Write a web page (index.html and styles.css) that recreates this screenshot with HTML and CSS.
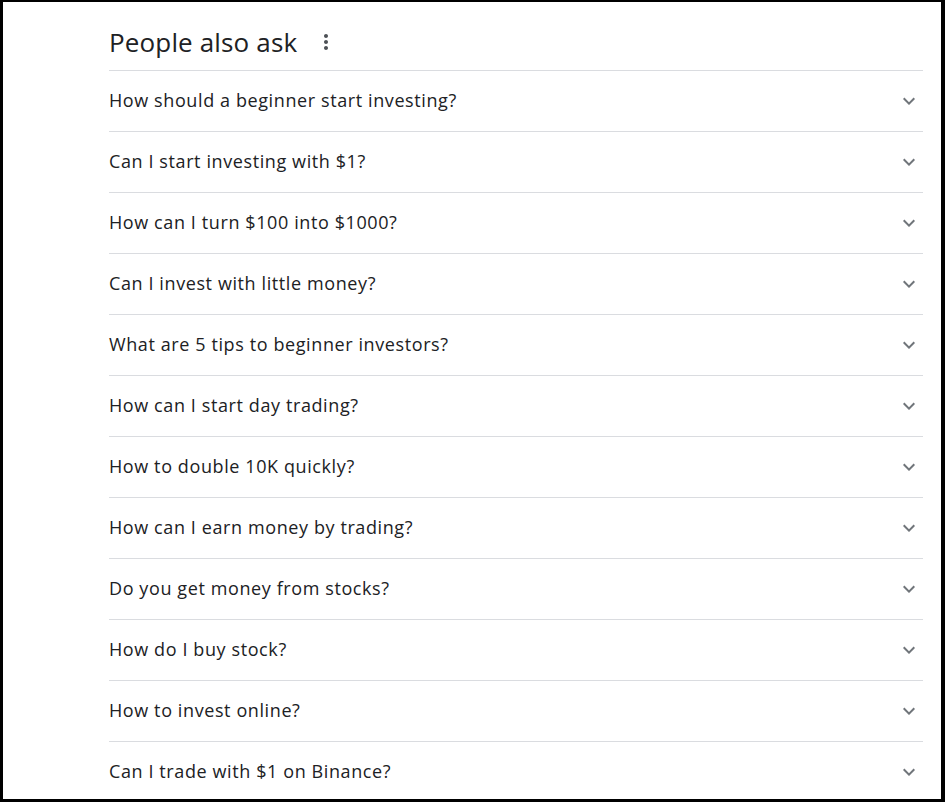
FILE: index.html
```html
<!DOCTYPE html>
<html>
<head>
<meta charset="utf-8">
<link rel="stylesheet" href="styles.css">
</head>
<body>
<div class="frame">
  <div class="paa">
    <div class="head">
      <h2 class="title">People also ask</h2>
      <svg class="more" width="24" height="24" viewBox="0 0 24 24"><path fill="#4d5156" d="M12 8c1.1 0 2-.9 2-2s-.9-2-2-2-2 .9-2 2 .9 2 2 2zm0 2c-1.1 0-2 .9-2 2s.9 2 2 2 2-.9 2-2-.9-2-2-2zm0 6c-1.1 0-2 .9-2 2s.9 2 2 2 2-.9 2-2-.9-2-2-2z"/></svg>
    </div>
    <ul class="list">
      <li class="row"><span class="q">How should a beginner start investing?</span><svg class="chev" width="24" height="24" viewBox="0 0 24 24"><path d="M16.59 8.59L12 13.17 7.41 8.59 6 10l6 6 6-6z"/></svg></li>
      <li class="row"><span class="q">Can I start investing with $1?</span><svg class="chev" width="24" height="24" viewBox="0 0 24 24"><path d="M16.59 8.59L12 13.17 7.41 8.59 6 10l6 6 6-6z"/></svg></li>
      <li class="row"><span class="q">How can I turn $100 into $1000?</span><svg class="chev" width="24" height="24" viewBox="0 0 24 24"><path d="M16.59 8.59L12 13.17 7.41 8.59 6 10l6 6 6-6z"/></svg></li>
      <li class="row"><span class="q">Can I invest with little money?</span><svg class="chev" width="24" height="24" viewBox="0 0 24 24"><path d="M16.59 8.59L12 13.17 7.41 8.59 6 10l6 6 6-6z"/></svg></li>
      <li class="row"><span class="q">What are 5 tips to beginner investors?</span><svg class="chev" width="24" height="24" viewBox="0 0 24 24"><path d="M16.59 8.59L12 13.17 7.41 8.59 6 10l6 6 6-6z"/></svg></li>
      <li class="row"><span class="q">How can I start day trading?</span><svg class="chev" width="24" height="24" viewBox="0 0 24 24"><path d="M16.59 8.59L12 13.17 7.41 8.59 6 10l6 6 6-6z"/></svg></li>
      <li class="row"><span class="q">How to double 10K quickly?</span><svg class="chev" width="24" height="24" viewBox="0 0 24 24"><path d="M16.59 8.59L12 13.17 7.41 8.59 6 10l6 6 6-6z"/></svg></li>
      <li class="row"><span class="q">How can I earn money by trading?</span><svg class="chev" width="24" height="24" viewBox="0 0 24 24"><path d="M16.59 8.59L12 13.17 7.41 8.59 6 10l6 6 6-6z"/></svg></li>
      <li class="row"><span class="q">Do you get money from stocks?</span><svg class="chev" width="24" height="24" viewBox="0 0 24 24"><path d="M16.59 8.59L12 13.17 7.41 8.59 6 10l6 6 6-6z"/></svg></li>
      <li class="row"><span class="q">How do I buy stock?</span><svg class="chev" width="24" height="24" viewBox="0 0 24 24"><path d="M16.59 8.59L12 13.17 7.41 8.59 6 10l6 6 6-6z"/></svg></li>
      <li class="row"><span class="q">How to invest online?</span><svg class="chev" width="24" height="24" viewBox="0 0 24 24"><path d="M16.59 8.59L12 13.17 7.41 8.59 6 10l6 6 6-6z"/></svg></li>
      <li class="row"><span class="q">Can I trade with $1 on Binance?</span><svg class="chev" width="24" height="24" viewBox="0 0 24 24"><path d="M16.59 8.59L12 13.17 7.41 8.59 6 10l6 6 6-6z"/></svg></li>
    </ul>
  </div>
</div>
</body>
</html>
```
FILE: styles.css
```css
html, body {
  margin: 0;
  padding: 0;
  background: #fff;
}
body {
  font-family: "Open Sans", Roboto, Arial, sans-serif;
  color: #202124;
}
.frame {
  box-sizing: border-box;
  width: 945px;
  height: 802px;
  border-style: solid;
  border-color: #000;
  border-width: 2px 4px 3px 3px;
  overflow: hidden;
  background: #fff;
}
.paa {
  margin-left: 106px;
  width: 814px;
}
.head {
  display: flex;
  align-items: center;
  box-sizing: border-box;
  height: 69px;
  padding-top: 12px;
  border-bottom: 1px solid #dadce0;
}
.title {
  margin: 0;
  font-weight: 400;
  font-size: 26px;
  letter-spacing: 0.15px;
  line-height: 32px;
  color: #202124;
}
.more {
  margin-left: 17px;
}
.list {
  list-style: none;
  margin: 0;
  padding: 0;
}
.row {
  display: flex;
  align-items: center;
  justify-content: space-between;
  height: 60px;
  border-bottom: 1px solid #dadce0;
}
.q {
  font-size: 18px;
  letter-spacing: 0.6px;
  margin-bottom: 2px;
  color: #202124;
}
.chev {
  fill: #70757a;
  margin-right: 2px;
}
```
